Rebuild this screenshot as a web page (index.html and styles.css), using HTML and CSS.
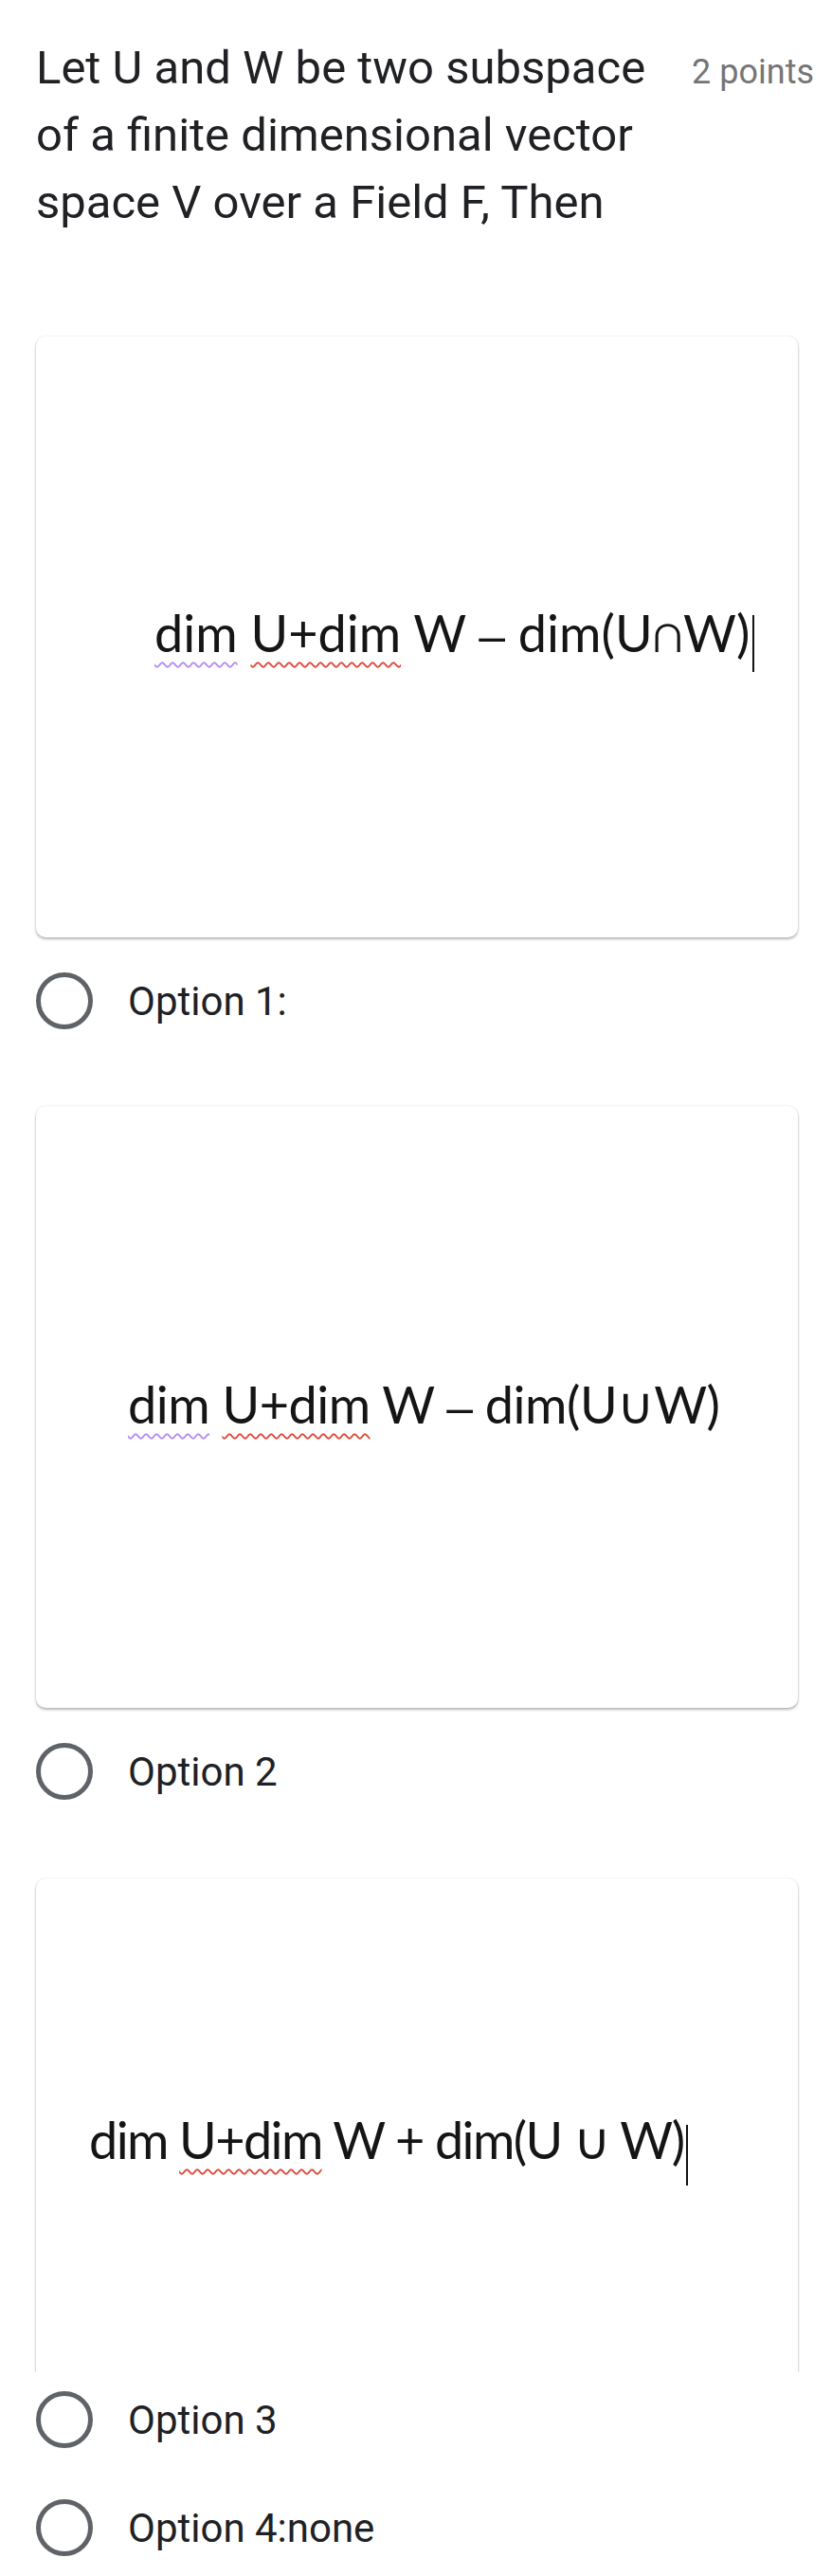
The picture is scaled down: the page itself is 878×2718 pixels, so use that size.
FILE: index.html
```html
<!DOCTYPE html>
<html lang="en">
<head>
<meta charset="utf-8">
<title>Question</title>
<link rel="stylesheet" href="styles.css">
</head>
<body>
<main class="page">
  <header class="q-head">
    <h1 class="q-title">Let U and W be two subspace of a finite dimensional vector space V over a Field F, Then</h1>
    <span class="q-points">2 points</span>
  </header>

  <div class="card card-1">
    <p class="formula"><span class="u-purple">dim</span> <span class="u-red">U+dim</span> W <span class="dash">–</span> dim(U∩W)<span class="caret"></span></p>
  </div>
  <div class="option option-1"><span class="radio"></span><span class="opt-text">Option 1:</span></div>

  <div class="card card-2">
    <p class="formula tight"><span class="u-purple">dim</span> <span class="u-red">U+dim</span> W <span class="dash">–</span> dim(U∪W)</p>
  </div>
  <div class="option option-2"><span class="radio"></span><span class="opt-text">Option 2</span></div>

  <div class="card-clip">
    <div class="card card-3">
      <p class="formula tighter">dim <span class="u-red">U+dim</span> W + dim(U ∪ W)<span class="caret caret-3"></span></p>
    </div>
  </div>
  <div class="option option-3"><span class="radio"></span><span class="opt-text">Option 3</span></div>
  <div class="option option-4"><span class="radio"></span><span class="opt-text">Option 4:none</span></div>
</main>
</body>
</html>
```

FILE: styles.css
```css
html, body {
  margin: 0;
  padding: 0;
  background: #ffffff;
}

.page {
  width: 878px;
  height: 2718px;
  overflow: hidden;
  font-family: Roboto, "Liberation Sans", sans-serif;
  color: #202124;
}

.q-head {
  display: flex;
  align-items: baseline;
  padding: 36px 19px 0 38px;
}

.q-title {
  margin: 0;
  width: 672px;
  font-size: 49px;
  font-weight: 400;
  line-height: 71px;
  color: #202124;
}

.q-points {
  margin-left: auto;
  font-size: 36px;
  line-height: 71px;
  color: #757575;
  white-space: nowrap;
}

.card {
  margin: 0 36px 0 38px;
  height: 634px;
  box-sizing: border-box;
  background: #ffffff;
  border-radius: 10px;
  box-shadow: 0 2px 3px rgba(0, 0, 0, 0.28), 0 0 2px rgba(0, 0, 0, 0.12);
}

.card-1 {
  margin-top: 106px;
  padding: 286px 0 0 125px;
}

.card-2 {
  height: 635px;
  padding: 288px 0 0 97px;
}

.card-clip {
  margin: 79px 32px 0 34px;
  padding: 4px 4px 0;
  height: 521px;
  overflow: hidden;
}

.card-3 {
  margin: 0;
  padding: 249px 0 0 56px;
}

.formula {
  margin: 0;
  font-family: Lato, "DejaVu Sans", sans-serif;
  font-size: 54px;
  line-height: 54px;
  color: #151515;
  white-space: nowrap;
}

.formula.tight {
  letter-spacing: -0.5px;
}

.formula.tighter {
  letter-spacing: -1.6px;
}

.dash {
  font-family: "Liberation Sans", sans-serif;
  font-size: 50px;
}

.u-purple,
.u-red {
  text-decoration-line: underline;
  text-decoration-style: wavy;
  text-decoration-thickness: 1.5px;
  text-underline-offset: 10px;
}

.u-purple {
  text-decoration-color: #b58cf4;
}

.u-red {
  text-decoration-color: #de4b3c;
}

.caret {
  display: inline-block;
  width: 2px;
  height: 60px;
  margin-left: 3px;
  background: #111111;
  vertical-align: -21px;
}

.caret-3 {
  height: 64px;
  vertical-align: -28px;
}

.option {
  display: flex;
  align-items: center;
  gap: 37px;
  padding-left: 38px;
  height: 60px;
}

.option-1 {
  margin: 37px 0 81px;
}

.option-2 {
  margin-top: 37px;
}

.option-3 {
  margin-top: 20px;
}

.option-4 {
  margin-top: 54px;
}

.radio {
  width: 60px;
  height: 60px;
  box-sizing: border-box;
  border: 5.5px solid #5f6368;
  border-radius: 50%;
  flex: 0 0 auto;
}

.opt-text {
  font-family: Roboto, "Liberation Sans", sans-serif;
  font-size: 42px;
  color: #202124;
  white-space: nowrap;
}
```
